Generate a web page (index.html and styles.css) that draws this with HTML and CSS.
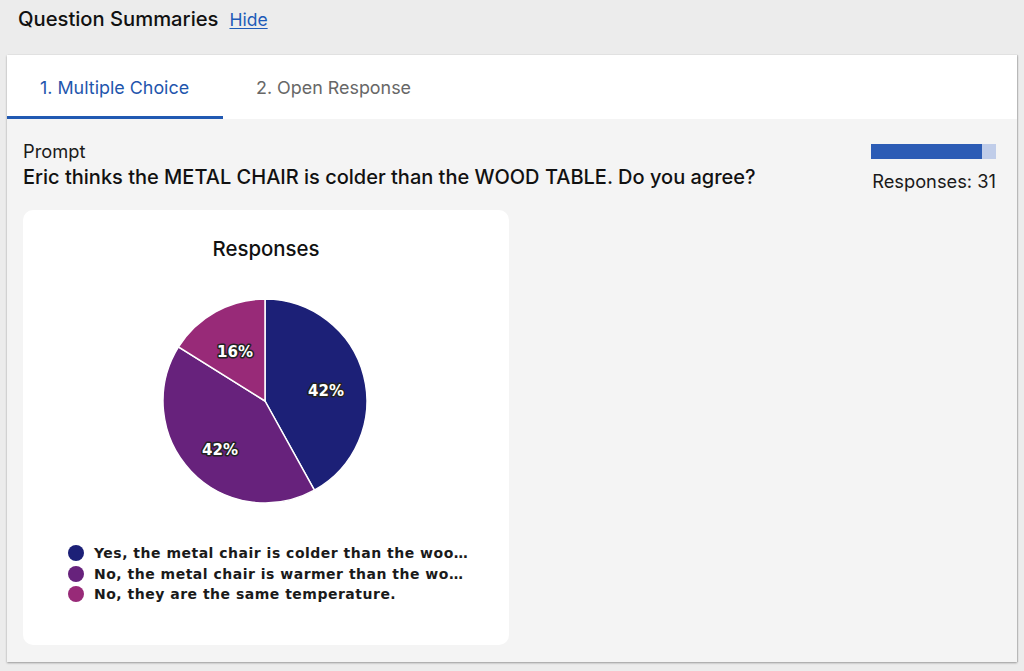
FILE: index.html
```html
<!DOCTYPE html>
<html>
<head>
<meta charset="utf-8">
<link rel="stylesheet" href="styles.css">
</head>
<body>
<div class="page">
  <div class="header">
    <h2 class="title">Question Summaries</h2>
    <a class="hide" href="#">Hide</a>
  </div>
  <div class="card">
    <div class="tabs">
      <div class="tab active">1. Multiple Choice</div>
      <div class="tab">2. Open Response</div>
    </div>
    <div class="content">
      <div class="prompt-row">
        <div class="prompt">
          <div class="prompt-label">Prompt</div>
          <div class="prompt-text">Eric thinks the METAL CHAIR is colder than the WOOD TABLE. Do you agree?</div>
        </div>
        <div class="stats">
          <div class="bar"><div class="bar-fill" style="width: 89%"></div></div>
          <div class="count">Responses: 31</div>
        </div>
      </div>
      <div class="chart-card">
        <div class="chart-title">Responses</div>
        <svg class="pie" width="486" height="250" viewBox="0 0 486 250">
          <g transform="translate(242,131)">
            <path d="M0,0 L0,-102 A102,102 0 0 1 49.4,89.2 Z" fill="#1c2077" stroke="#fff" stroke-width="1.5"/>
            <path d="M0,0 L49.4,89.2 A102,102 0 0 1 -86.5,-54.1 Z" fill="#67227c" stroke="#fff" stroke-width="1.5"/>
            <path d="M0,0 L-86.5,-54.1 A102,102 0 0 1 0,-102 Z" fill="#982a78" stroke="#fff" stroke-width="1.5"/>
            <g class="pie-labels">
              <text x="61" y="-10">42%</text>
              <text x="-45" y="49">42%</text>
              <text x="-30" y="-49">16%</text>
            </g>
          </g>
        </svg>
        <ul class="legend">
          <li><span class="dot d1"></span>Yes, the metal chair is colder than the woo…</li>
          <li><span class="dot d2"></span>No, the metal chair is warmer than the wo…</li>
          <li><span class="dot d3"></span>No, they are the same temperature.</li>
        </ul>
      </div>
    </div>
  </div>
</div>
</body>
</html>
```

FILE: styles.css
```css
html, body {
  margin: 0;
  padding: 0;
  background: #ececec;
}
body {
  font-family: Inter, Roboto, "Liberation Sans", sans-serif;
  color: #1a1a1a;
  width: 1024px;
  height: 671px;
  overflow: hidden;
}
.page {
  padding: 5px 7px 0 7px;
}
.header {
  display: flex;
  align-items: baseline;
  gap: 11px;
  padding-left: 11px;
  height: 50px;
}
.title {
  margin: 0;
  font-size: 20.2px;
  font-weight: 500;
  line-height: 28px;
  color: #111;
}
.hide {
  font-size: 17.5px;
  color: #1e5bb8;
  text-decoration: underline;
  text-underline-offset: 2px;
}
.card {
  background: #f4f4f4;
  box-shadow: 0 1px 2px rgba(0,0,0,0.35), 1px 0 1px rgba(0,0,0,0.12);
  height: 607px;
}
.tabs {
  display: flex;
  background: #fff;
  height: 64px;
}
.tab {
  padding: 0 33px;
  width: 150px;
  box-sizing: content-box;
  display: flex;
  align-items: center;
  padding-top: 4px;
  font-size: 17.9px;
  color: #676767;
  border-bottom: 3px solid transparent;
  white-space: nowrap;
}
.tab.active {
  color: #1f56ad;
  border-bottom-color: #2159b2;
}
.content {
  padding: 20px 21px 0 16px;
}
.prompt-row {
  display: flex;
  justify-content: space-between;
  align-items: flex-start;
}
.prompt-label {
  font-size: 18.3px;
  line-height: 24px;
  color: #1a1a1a;
}
.prompt-text {
  font-size: 20px;
  font-weight: 500;
  line-height: 28px;
  color: #111;
}
.stats {
  display: flex;
  flex-direction: column;
  align-items: flex-end;
  padding-top: 5px;
}
.bar {
  width: 125px;
  height: 15px;
  background: #c0cde9;
}
.bar-fill {
  height: 100%;
  background: #2c5cb5;
}
.count {
  font-size: 18.3px;
  margin-top: 11px;
  color: #1a1a1a;
}
.chart-card {
  margin-top: 18px;
  width: 486px;
  height: 435px;
  background: #fff;
  border-radius: 10px;
}
.chart-title {
  text-align: center;
  font-size: 20.4px;
  font-weight: 500;
  padding-top: 26px;
  line-height: 25px;
  color: #111;
}
.pie {
  display: block;
  margin-top: 9px;
}
.pie-labels text {
  font-family: "DejaVu Sans", Verdana, sans-serif;
  font-weight: bold;
  font-size: 15px;
  fill: #fff;
  stroke: #222;
  stroke-width: 3px;
  stroke-linejoin: round;
  paint-order: stroke;
  text-anchor: middle;
  dominant-baseline: middle;
}
.legend {
  list-style: none;
  margin: 23px 0 0 45px;
  padding: 0;
  font-family: "DejaVu Sans", Verdana, sans-serif;
  font-weight: bold;
  font-size: 14px;
  letter-spacing: 0.5px;
  color: #1a1a1a;
}
.legend li {
  display: flex;
  align-items: center;
  height: 20.5px;
  white-space: nowrap;
}
.dot {
  width: 16px;
  height: 16px;
  border-radius: 50%;
  margin-right: 10px;
  flex: none;
}
.d1 { background: #1c2077; }
.d2 { background: #67227c; }
.d3 { background: #982a78; }
```
